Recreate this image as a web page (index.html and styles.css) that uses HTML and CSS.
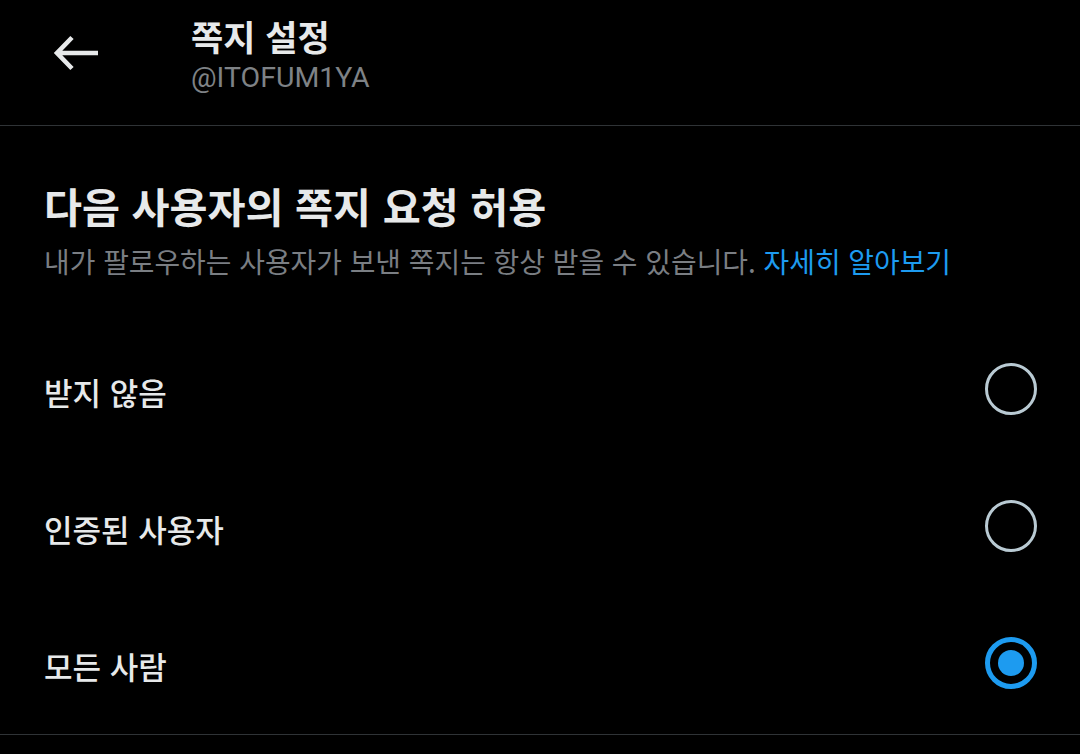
FILE: index.html
```html
<!DOCTYPE html>
<html lang="ko">
<head>
<meta charset="utf-8">
<link rel="stylesheet" href="styles.css">
</head>
<body>
<header class="topbar">
  <div class="back">
    <svg width="48" height="38" viewBox="0 0 48 38"><path d="M4 19H46M20 3.5L5 19L20 34.5" fill="none" stroke="#e7e9ea" stroke-width="4.6" stroke-linecap="butt" stroke-linejoin="miter"/></svg>
  </div>
  <div class="titles">
    <div class="title">쪽지 설정</div>
    <div class="handle">@ITOFUM1YA</div>
  </div>
</header>
<main class="content">
  <section class="intro">
    <h1 class="heading">다음 사용자의 쪽지 요청 허용</h1>
    <p class="sub">내가 팔로우하는 사용자가 보낸 쪽지는 항상 받을 수 있습니다. <span class="link">자세히 알아보기</span></p>
  </section>
  <ul class="options">
    <li class="option"><span class="label">받지 않음</span><span class="radio"></span></li>
    <li class="option"><span class="label">인증된 사용자</span><span class="radio"></span></li>
    <li class="option"><span class="label">모든 사람</span><span class="radio checked"></span></li>
  </ul>
</main>
</body>
</html>
```
FILE: styles.css
```css
html, body {
  margin: 0;
  padding: 0;
  background: #000;
  width: 1080px;
  height: 754px;
  overflow: hidden;
  font-family: Roboto, "Noto Sans CJK KR", sans-serif;
  color: #e7e9ea;
}
.topbar {
  height: 126px;
  border-bottom: 1px solid #2f3336;
  display: flex;
  align-items: flex-start;
  box-sizing: border-box;
}
.back {
  width: 48px;
  margin: 34px 0 0 52px;
  height: 38px;
}
.back svg { display: block; }
.titles {
  margin: 12px 0 0 91px;
  display: flex;
  flex-direction: column;
}
.title {
  font-size: 35px;
  font-weight: 700;
  line-height: 48px;
  font-family: "Noto Sans CJK KR", sans-serif;
}
.handle {
  font-size: 28.5px;
  line-height: 36px;
  color: #7e8286;
  font-family: Roboto, sans-serif;
}
.content {
  padding: 0 44px;
  border-bottom: 1px solid #2f3336;
}
.intro {
  padding-top: 51px;
}
.heading {
  margin: 0;
  font-size: 41.3px;
  font-weight: 700;
  line-height: 56px;
  font-family: "Noto Sans CJK KR", sans-serif;
}
.sub {
  margin: 8px 0 0;
  font-size: 27.9px;
  line-height: 40px;
  color: #7a7e83;
  font-family: "Noto Sans CJK KR", sans-serif;
}
.link { color: #1d9bf0; }
.options {
  list-style: none;
  margin: 0;
  padding: 42px 0 0;
}
.option {
  height: 137px;
  display: flex;
  align-items: center;
  justify-content: space-between;
}
.label {
  font-size: 31px;
  font-weight: 500;
  font-family: "Noto Sans CJK KR", sans-serif;
}
.radio {
  width: 52px;
  height: 52px;
  box-sizing: border-box;
  border: 3px solid #b9cad3;
  border-radius: 50%;
  margin: 0 -1px 6px 0;
  display: flex;
  align-items: center;
  justify-content: center;
}
.radio.checked {
  border: 5px solid #1d9bf0;
}
.radio.checked::after {
  content: "";
  width: 26px;
  height: 26px;
  border-radius: 50%;
  background: #1d9bf0;
}
```
